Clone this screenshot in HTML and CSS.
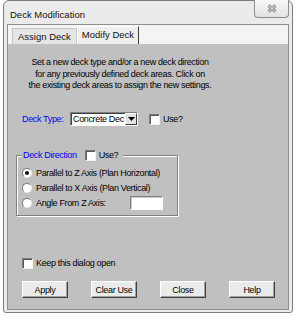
FILE: index.html
```html
<!DOCTYPE html>
<html lang="en">
<head>
    <meta charset="UTF-8">
    <title>Deck Modification</title>
    <link rel="stylesheet" href="styles.css">
</head>
<body>
    <div class="window">
        <div class="titlebar">
            <span class="title">Deck Modification</span>
            <span class="close">
                <svg width="10" height="9" viewBox="0 0 10 9">
                    <path d="M1.5 1.5 L8.5 7.5 M8.5 1.5 L1.5 7.5" stroke="#8a8a8a" stroke-width="3" fill="none"/>
                    <path d="M1.5 1.5 L8.5 7.5 M8.5 1.5 L1.5 7.5" stroke="#f2f2f2" stroke-width="1" fill="none"/>
                </svg>
            </span>
        </div>
        <div class="client">
            <div class="tabs">
                <span class="tab">Assign Deck</span>
                <span class="tab active">Modify Deck</span>
            </div>
            <div class="panel">
                <p class="intro">Set a new deck type and/or a new deck direction<br>for any previously defined deck areas. Click on<br>the existing deck areas to assign the new settings.</p>

                <div class="type-row">
                    <span class="type-label">Deck Type:</span>
                    <span class="select">
                        <span class="select-text">Concrete Dec</span>
                        <span class="drop">
                            <svg width="7" height="4" viewBox="0 0 7 4"><path d="M0 0 H7 L3.5 4 Z" fill="#000"/></svg>
                        </span>
                    </span>
                    <span class="check use-check"></span>
                    <span class="use">Use?</span>
                </div>

                <fieldset class="group">
                    <legend><span class="legend-inner"><span class="legend-text">Deck Direction</span><span class="check"></span><span class="use">Use?</span></span></legend>
                    <div class="radio-row"><span class="radio on"></span><span>Parallel to Z Axis (Plan Horizontal)</span></div>
                    <div class="radio-row"><span class="radio"></span><span>Parallel to X Axis (Plan Vertical)</span></div>
                    <div class="radio-row"><span class="radio"></span><span class="angle-label">Angle From Z Axis:</span><span class="textbox"></span></div>
                </fieldset>

                <div class="keep-row"><span class="check"></span><span class="use">Keep this dialog open</span></div>

                <div class="buttons">
                    <span class="btn">Apply</span>
                    <span class="btn">Clear Use</span>
                    <span class="btn">Close</span>
                    <span class="btn">Help</span>
                </div>
            </div>
        </div>
    </div>
</body>
</html>
```

FILE: styles.css
```css
body {
    margin: 0;
    background-color: #fff;
    font-family: "Liberation Sans", Arial, sans-serif;
    color: #111;
}

/* window frame */
.window {
    box-sizing: border-box;
    width: 290px;
    height: 313px;
    margin-left: 3px;
    padding: 0 3px 2px;
    border: 1px solid #7d7d7d;
    border-radius: 6px 6px 3px 3px;
    background-color: #ebebeb;
    display: flex;
    flex-direction: column;
}

.titlebar {
    height: 23px;
    display: flex;
    justify-content: space-between;
    align-items: flex-start;
}

.title {
    font-size: 9.5px;
    line-height: 12px;
    padding: 8px 0 0 3px;
}

.close {
    box-sizing: border-box;
    width: 35px;
    height: 18px;
    margin-top: -1px;
    border: 1px solid #8d8d8d;
    border-top: none;
    border-radius: 0 0 4px 4px;
    background: linear-gradient(#f7f7f7, #e2e2e2);
    display: flex;
    align-items: center;
    justify-content: center;
}

.client {
    flex: 1;
    border: 1px solid #8f8f8f;
    background-color: #f4f4f4;
    display: flex;
    flex-direction: column;
}

/* tabs */
.tabs {
    height: 19px;
    display: flex;
    align-items: flex-end;
    padding-left: 4px;
}

.tab {
    box-sizing: border-box;
    height: 16px;
    line-height: 15px;
    padding: 0 5px;
    font-size: 9.5px;
    border: 1px solid #c4c4c4;
    border-bottom: none;
    background-color: #e6e6e6;
}

.tab.active {
    height: 18px;
    line-height: 16px;
    padding: 0 4px;
    background-color: #efefef;
    border-color: #fff #3c3c3c #fff #fff;
}

/* page body */
.panel {
    flex: 1;
    background-color: #c0c0c0;
    font-size: 9px;
    letter-spacing: -0.35px;
    color: #000;
}

.intro {
    width: 200px;
    margin: 13px 0 0 12px;
    text-align: center;
    line-height: 11.5px;
}

.type-row {
    height: 14px;
    margin-top: 20.5px;
    padding-left: 14px;
    display: flex;
    align-items: center;
}

.type-label,
.legend-text {
    color: #0000f0;
}

.type-label {
    width: 48px;
}

.select {
    box-sizing: border-box;
    width: 68px;
    height: 14px;
    background-color: #fff;
    border: 1px solid;
    border-color: #808080 #fff #fff #808080;
    box-shadow: inset 1px 1px 0 #404040;
    display: flex;
    align-items: center;
}

.select-text {
    flex: 1;
    white-space: nowrap;
    padding-left: 2px;
}

.drop {
    box-sizing: border-box;
    width: 12px;
    height: 12px;
    background-color: #e2e2e2;
    border: 1px solid;
    border-color: #fff #404040 #404040 #fff;
    display: flex;
    align-items: center;
    justify-content: center;
}

.check {
    box-sizing: border-box;
    width: 11px;
    height: 11px;
    flex-shrink: 0;
    background-color: #fff;
    border: 1px solid;
    border-color: #7a7a7a #f2f2f2 #f2f2f2 #7a7a7a;
    box-shadow: inset 1px 1px 0 #5a5a5a;
}

.use-check {
    margin-left: 11px;
}

.use {
    margin-left: 3px;
}

/* group box */
.group {
    box-sizing: border-box;
    width: 162px;
    margin: 23px 0 0 8px;
    padding: 4px 5px 5px;
    min-inline-size: 0;
    border: 1px solid #808080;
    box-shadow: inset 1px 1px 0 #fff, 1px 1px 0 #fff;
}

.group legend {
    padding: 0 5px 0 1px;
    background-color: #c0c0c0;
}

.legend-inner {
    height: 12px;
    display: flex;
    align-items: center;
}

.legend-text {
    margin-right: 8px;
}

.radio-row {
    height: 15px;
    display: flex;
    align-items: center;
}

.radio {
    box-sizing: border-box;
    width: 10px;
    height: 10px;
    margin-right: 4px;
    border-radius: 50%;
    background-color: #fff;
    border: 1px solid;
    border-color: #7a7a7a #ececec #ececec #7a7a7a;
    display: flex;
    align-items: center;
    justify-content: center;
}

.radio.on::after {
    content: "";
    width: 4px;
    height: 4px;
    border-radius: 50%;
    background-color: #111;
}

.angle-label {
    width: 94px;
}

.textbox {
    box-sizing: border-box;
    width: 33px;
    height: 14px;
    background-color: #fff;
    border: 1px solid;
    border-color: #808080 #fff #fff #808080;
    box-shadow: inset 1px 1px 0 #c8c8c8;
}

.keep-row {
    height: 12px;
    margin-top: 41px;
    padding-left: 14px;
    display: flex;
    align-items: center;
}

.buttons {
    margin-top: 12px;
    padding-left: 14px;
    display: flex;
    gap: 23px;
}

.btn {
    box-sizing: border-box;
    width: 46px;
    height: 17px;
    background-color: #ebebeb;
    border: 1px solid;
    border-color: #fff #404040 #404040 #fff;
    box-shadow: inset -1px -1px 0 #a0a0a0;
    display: flex;
    align-items: center;
    justify-content: center;
}
```
